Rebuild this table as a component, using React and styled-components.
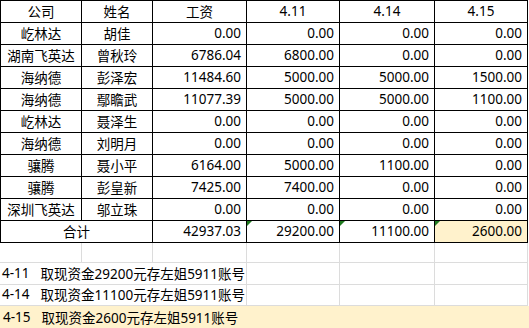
import React from "react";
import styled, { createGlobalStyle, css } from "styled-components";

const Global = createGlobalStyle`
  html, body { margin: 0; padding: 0; background: #fff; }
  body {
    font-family: "Noto Sans", "Noto Sans CJK SC", sans-serif;
    font-size: 13.5px;
    color: #000;
  }
`;

const COLS = "81px 71px 94px 93px 95px 93px";

const Page = styled.div`
  width: 529px;
  height: 328px;
  overflow: hidden;
  display: flex;
  flex-direction: column;
`;

const Sheet = styled.div`
  display: flex;
  flex-direction: column;
  width: 528px;
  border-left: 1px solid #000;
  border-top: 1px solid #000;
  box-sizing: border-box;
`;

const Row = styled.div`
  display: grid;
  grid-template-columns: ${COLS};
  margin-left: -1px;
  padding-left: 1px;
`;

const Cell = styled.div`
  position: relative;
  box-sizing: border-box;
  height: 22px;
  border-right: 1px solid #000;
  border-bottom: 1px solid #000;
  display: flex;
  align-items: center;
  justify-content: ${(p) => (p.$align === "right" ? "flex-end" : "center")};
  padding: 0 5px 1px 5px;
  white-space: nowrap;
  grid-column: span ${(p) => p.$span || 1};
  background: ${(p) => (p.$hl ? "#fff2cc" : "transparent")};
  ${(p) =>
    p.$flag &&
    css`
      &::before {
        content: "";
        position: absolute;
        top: 0;
        left: 0;
        border-top: 5px solid #1f7a1f;
        border-right: 5px solid transparent;
      }
    `}
`;

const Lower = styled.div`
  display: flex;
  flex-direction: column;
  flex: 1;
`;

const GridRow = styled.div`
  display: grid;
  grid-template-columns: ${COLS};
  padding-left: 1px;
  height: ${(p) => p.$h}px;
`;

const GridCell = styled.div`
  box-sizing: border-box;
  border-right: 1px solid #dcdcdc;
  border-bottom: 1px solid #dcdcdc;
  grid-column: span ${(p) => p.$span || 1};
  display: flex;
  align-items: center;
  white-space: nowrap;
  padding: 0 0 1px 2px;
  margin-left: ${(p) => (p.$first ? "-1px" : "0")};
`;

const HighlightRow = styled.div`
  flex: 1;
  background: #fff2cc;
  display: flex;
  align-items: center;
  padding: 0 0 1px 3px;
  white-space: nowrap;
`;

const DateTag = styled.span`
  margin-right: 11px;
`;

const header = ["公司", "姓名", "工资", "4.11", "4.14", "4.15"];

const data = [
  ["屹林达", "胡佳", "0.00", "0.00", "0.00", "0.00"],
  ["湖南飞英达", "曾秋玲", "6786.04", "6800.00", "0.00", "0.00"],
  ["海纳德", "彭泽宏", "11484.60", "5000.00", "5000.00", "1500.00"],
  ["海纳德", "鄢瞻武", "11077.39", "5000.00", "5000.00", "1100.00"],
  ["屹林达", "聂泽生", "0.00", "0.00", "0.00", "0.00"],
  ["海纳德", "刘明月", "0.00", "0.00", "0.00", "0.00"],
  ["骧腾", "聂小平", "6164.00", "5000.00", "1100.00", "0.00"],
  ["骧腾", "彭皇新", "7425.00", "7400.00", "0.00", "0.00"],
  ["深圳飞英达", "邬立珠", "0.00", "0.00", "0.00", "0.00"],
];

const notes = [
  { date: "4-11", text: "取现资金29200元存左姐5911账号", h: 21 },
  { date: "4-14", text: "取现资金11100元存左姐5911账号", h: 22 },
];

export default function App() {
  return (
    <>
      <Global />
      <Page>
        <Sheet>
          <Row>
            {header.map((h) => (
              <Cell key={h}>{h}</Cell>
            ))}
          </Row>
          {data.map((r, i) => (
            <Row key={i}>
              <Cell>{r[0]}</Cell>
              <Cell>{r[1]}</Cell>
              {r.slice(2).map((v, j) => (
                <Cell key={j} $align="right">
                  {v}
                </Cell>
              ))}
            </Row>
          ))}
          <Row>
            <Cell $span={2}>合计</Cell>
            <Cell $align="right">42937.03</Cell>
            <Cell $align="right" $flag>
              29200.00
            </Cell>
            <Cell $align="right" $flag>
              11100.00
            </Cell>
            <Cell $align="right" $flag $hl>
              2600.00
            </Cell>
          </Row>
        </Sheet>
        <Lower>
          <GridRow $h={20}>
            {Array.from({ length: 6 }).map((_, i) => (
              <GridCell key={i} $first={i === 0} />
            ))}
          </GridRow>
          {notes.map((n) => (
            <GridRow key={n.date} $h={n.h}>
              <GridCell $span={3} $first>
                <DateTag>{n.date}</DateTag>
                {n.text}
              </GridCell>
              <GridCell />
              <GridCell />
              <GridCell />
            </GridRow>
          ))}
          <HighlightRow>
            <DateTag>4-15</DateTag>取现资金2600元存左姐5911账号
          </HighlightRow>
        </Lower>
      </Page>
    </>
  );
}
